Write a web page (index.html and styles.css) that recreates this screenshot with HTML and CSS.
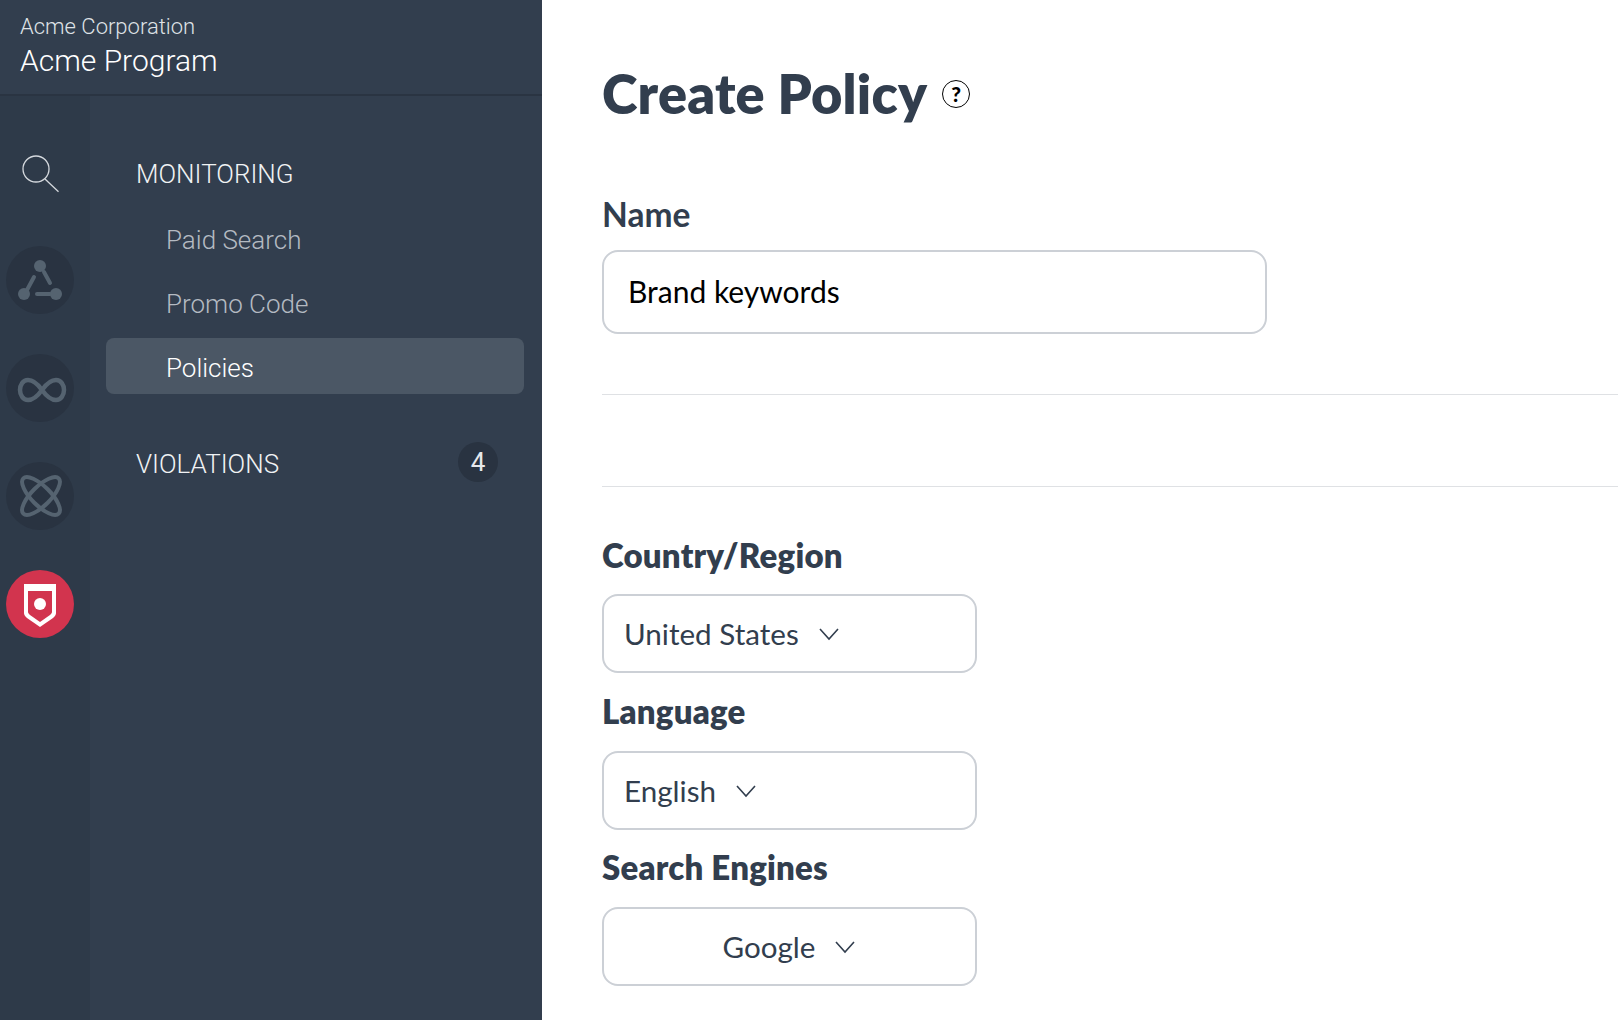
FILE: index.html
```html
<!DOCTYPE html>
<html lang="en">
<head>
  <meta charset="UTF-8">
  <meta name="viewport" content="width=device-width, initial-scale=1.0">
  <title>Create Policy</title>
  <link rel="stylesheet" href="styles.css">
</head>
<body>
  <aside class="sidebar">
    <div class="brand">
      <p class="brand-company">Acme Corporation</p>
      <p class="brand-program">Acme Program</p>
    </div>
    <div class="sidebar-body">
      <div class="rail">
        <svg class="rail-search" width="44" height="44" viewBox="0 0 44 44" fill="none" stroke="#d5d9de" stroke-width="1.3">
          <circle cx="16" cy="16" r="13"/>
          <path d="M25 26 L38.5 38.7"/>
        </svg>
        <div class="rail-btn">
          <svg width="68" height="68" viewBox="0 0 68 68" fill="none" stroke="#556370" stroke-width="4" stroke-linecap="round">
            <path d="M38 26 L44 37"/>
            <path d="M28 31 L21 44"/>
            <path d="M31 48 H44"/>
            <g fill="#556370" stroke="none">
              <circle cx="34" cy="20" r="6"/>
              <circle cx="18" cy="48" r="6"/>
              <circle cx="50" cy="48" r="6"/>
            </g>
          </svg>
        </div>
        <div class="rail-btn">
          <svg width="68" height="68" viewBox="0 0 68 68" fill="none" stroke="#556370" stroke-width="4.5">
            <path d="M36 36 C31 29 26 26 22 26 C17 26 14 31 14 36 C14 41 17 46 22 46 C26 46 31 43 36 36 C41 29 46 26 50 26 C55 26 58 31 58 36 C58 41 55 46 50 46 C46 46 41 43 36 36 Z"/>
          </svg>
        </div>
        <div class="rail-btn">
          <svg width="68" height="68" viewBox="0 0 68 68" fill="none" stroke="#556370" stroke-width="4">
            <ellipse cx="35" cy="34" rx="25" ry="9.5" transform="rotate(45 35 34)"/>
            <ellipse cx="35" cy="34" rx="25" ry="9.5" transform="rotate(-45 35 34)"/>
          </svg>
        </div>
        <div class="rail-btn rail-btn-active">
          <svg width="68" height="68" viewBox="0 0 68 68">
            <path d="M18 14 H50 V43 C50 45 49 46 47 48 L34 57 L21 48 C19 46 18 45 18 43 Z" fill="#fff"/>
            <path d="M22 21 H46 V42 C46 43 45 44 44 45 L34 52 L24 45 C23 44 22 43 22 42 Z" fill="#d2344e"/>
            <circle cx="34" cy="34" r="6" fill="#fff"/>
          </svg>
        </div>
      </div>
      <nav class="menu">
        <a class="menu-head menu-monitoring" href="#">MONITORING</a>
        <a class="menu-item" href="#">Paid Search</a>
        <a class="menu-item" href="#">Promo Code</a>
        <a class="menu-item menu-item-active" href="#" aria-current="page">Policies</a>
        <a class="menu-head menu-violations" href="#">VIOLATIONS <span class="badge">4</span></a>
      </nav>
    </div>
  </aside>

  <main class="content">
    <div class="title-row">
      <h1>Create Policy</h1>
      <span class="help">?</span>
    </div>

    <label class="name-label">Name</label>
    <div class="name-input">Brand keywords</div>

    <hr class="rule rule-first">
    <hr class="rule rule-second">

    <h2 class="field-label field-country">Country/Region</h2>
    <div class="select select-country">
      United States
      <svg class="chevron" width="22" height="14" viewBox="0 0 22 14" fill="none" stroke="#323e4e" stroke-width="1.6"><path d="M2 2 L11 12 L20 2"/></svg>
    </div>
    <h2 class="field-label">Language</h2>
    <div class="select">
      English
      <svg class="chevron" width="22" height="14" viewBox="0 0 22 14" fill="none" stroke="#323e4e" stroke-width="1.6"><path d="M2 2 L11 12 L20 2"/></svg>
    </div>
    <h2 class="field-label field-engines">Search Engines</h2>
    <div class="select select-center">
      Google
      <svg class="chevron" width="22" height="14" viewBox="0 0 22 14" fill="none" stroke="#323e4e" stroke-width="1.6"><path d="M2 2 L11 12 L20 2"/></svg>
    </div>
  </main>
</body>
</html>
```

FILE: styles.css
```css
:root {
  --navy: #323e4e;
  --rail: #2e3a49;
  --dark: #293341;
  --line: #ccd0d6;
}

* {
  margin: 0;
  padding: 0;
  box-sizing: border-box;
}

html, body {
  height: 100%;
}

body {
  display: flex;
  overflow: hidden;
  background-color: #fff;
  color: var(--navy);
  font-family: 'Lato', 'Noto Sans', Arial, sans-serif;
}

.sidebar {
  flex: 0 0 542px;
  display: flex;
  flex-direction: column;
  background-color: var(--navy);
  font-family: 'Roboto', Arial, sans-serif;
  font-weight: 300;
}

.brand {
  height: 96px;
  padding: 13px 20px 0;
  border-bottom: 2px solid #2a3442;
  color: #fff;
}

.brand-company {
  font-size: 22px;
  line-height: 28px;
  color: #dfe2e6;
}

.brand-program {
  font-size: 30px;
  line-height: 40px;
}

.sidebar-body {
  flex: 1;
  display: flex;
}

.rail {
  flex: 0 0 90px;
  display: flex;
  flex-direction: column;
  align-items: center;
  padding: 57px 10px 0 0;
  background-color: var(--rail);
}

.rail-search {
  margin: 0 0 49px 3px;
}

.rail-btn {
  width: 68px;
  height: 68px;
  margin-bottom: 40px;
  border-radius: 50%;
  background-color: var(--dark);
}

.rail-btn svg {
  display: block;
}

.rail-btn-active {
  background-color: #d2344e;
}

.menu {
  flex: 1;
  display: flex;
  flex-direction: column;
  padding: 0 18px 0 16px;
}

.menu a {
  text-decoration: none;
}

.menu-head {
  display: flex;
  align-items: center;
  justify-content: space-between;
  padding: 0 26px 0 30px;
  font-size: 26px;
  color: #f0f2f4;
}

.menu-monitoring {
  height: 56px;
  margin: 50px 0 8px;
}

.menu-violations {
  height: 56px;
  margin-top: 34px;
}

.menu-item {
  display: flex;
  align-items: center;
  height: 56px;
  margin-bottom: 8px;
  padding: 3px 0 0 60px;
  border-radius: 8px;
  font-size: 26px;
  color: #b4bac2;
}

.menu-item-active {
  background-color: #4b5765;
  color: #fff;
}

.badge {
  width: 40px;
  height: 40px;
  margin-top: -4px;
  border-radius: 50%;
  background-color: var(--dark);
  text-align: center;
  line-height: 40px;
  font-size: 26px;
  font-weight: 400;
  color: #e6e8eb;
}

.content {
  flex: 1;
  min-width: 0;
  padding-left: 60px;
}

.title-row {
  display: flex;
  align-items: center;
  gap: 15px;
  height: 64px;
  margin-top: 62px;
}

h1 {
  font-size: 54px;
  font-weight: 800;
  line-height: 64px;
  letter-spacing: 0.2px;
}

.help {
  width: 28px;
  height: 28px;
  border: 1px solid #000;
  border-radius: 50%;
  text-align: center;
  line-height: 26px;
  font-size: 21px;
  font-weight: 900;
  color: #000;
}

.name-label {
  display: block;
  margin-top: 68px;
  font-size: 33.5px;
  font-weight: 700;
  line-height: 40px;
}

.name-input {
  display: flex;
  align-items: center;
  width: 665px;
  height: 84px;
  margin-top: 16px;
  padding: 0 0 3px 24px;
  border: 2px solid var(--line);
  border-radius: 16px;
  font-size: 30px;
  color: #000;
}

.rule {
  border: 0;
  border-top: 1px solid #dfe1e4;
}

.rule-first {
  margin-top: 60px;
}

.rule-second {
  margin-top: 91px;
}

.field-label {
  margin-top: 18px;
  font-size: 33px;
  font-weight: 800;
  line-height: 40px;
  letter-spacing: 0.2px;
}

.field-country {
  margin-top: 48px;
}

.field-engines {
  margin-top: 17px;
}

.select {
  display: flex;
  align-items: center;
  gap: 19px;
  width: 375px;
  height: 79px;
  margin-top: 20px;
  padding-left: 20px;
  border: 2px solid var(--line);
  border-radius: 16px;
  font-size: 29.6px;
}

.select-country {
  margin-top: 19px;
}

.select-center {
  justify-content: center;
  padding-left: 0;
}
```
